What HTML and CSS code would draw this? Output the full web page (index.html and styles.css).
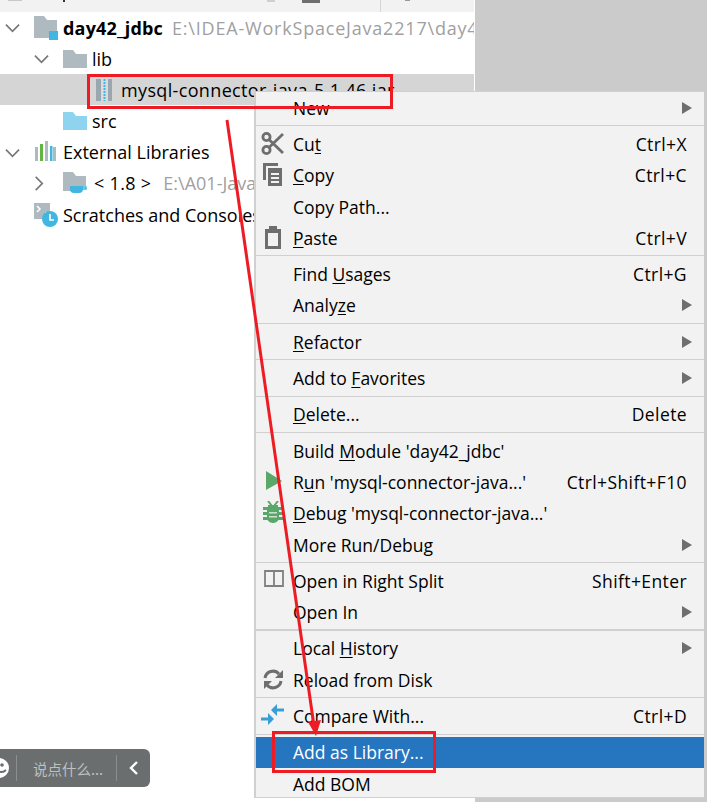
FILE: index.html
```html
<!DOCTYPE html>
<html lang="en">
<head>
<meta charset="utf-8">
<title>Add as Library</title>
<link rel="stylesheet" href="styles.css">
</head>
<body>
<div class="screen">
  <aside class="project">
    <div class="toolbar">
      <span class="tb tb-a"></span><span class="tb tb-b"></span><span class="tb tb-c"></span><span class="tb tb-d"></span><span class="tb tb-e"></span><span class="tb tb-f"></span>
    </div>
    <div class="tree">
      <div class="node d0">
        <svg class="twist" viewBox="0 0 16 16"><path d="M1 5l7 7 7-7" /></svg>
        <svg class="ico" viewBox="0 0 24 24"><path fill="#afb9c0" d="M0 0h10l3 4h10v12h-6v6H0z"/><path fill="#40b6e0" d="M15 15h9v9h-9z"/></svg>
        <b class="name bold">day42_jdbc</b><span class="path wide">E:\IDEA-WorkSpaceJava2217\day42_jdbc</span>
      </div>
      <div class="node d1">
        <svg class="twist" viewBox="0 0 16 16"><path d="M1 5l7 7 7-7" /></svg>
        <svg class="ico" viewBox="0 0 24 18" ><path fill="#afb9c0" d="M0 0h10l3 4h11v14H0z"/></svg>
        <span class="name">lib</span>
      </div>
      <div class="node d2 sel">
        <svg class="jar" viewBox="0 0 16 22"><path fill="#9aa7b0" d="M0 0h16v22H0z"/><path fill="#d8dcdd" d="M5 0h7v22H5z"/><path fill="none" stroke="#40b6e0" stroke-width="2" stroke-dasharray="2 1" d="M8.500 0v22"/></svg>
        <span class="name jarname">mysql-connector-java-5.1.46.jar</span>
      </div>
      <div class="node d1 leaf">
        <svg class="ico" viewBox="0 0 24 18"><path fill="#8fd4ef" d="M0 0h10l3 4h11v14H0z"/></svg>
        <span class="name">src</span>
      </div>
      <div class="node d0">
        <svg class="twist" viewBox="0 0 16 16"><path d="M1 5l7 7 7-7" /></svg>
        <svg class="ico" viewBox="0 0 24 24"><path fill="#afb9c0" d="M1 7h3v14H1zM11 1h3v20h-3zM19 7h3v14h-3z"/><path fill="#62b543" d="M6 4h3v17H6z"/><path fill="#40b6e0" d="M16 6h2.500v15H16z"/></svg>
        <span class="name">External Libraries</span>
      </div>
      <div class="node d1">
        <svg class="twist chev" viewBox="0 0 16 16"><path d="M5 1l7 7-7 7" /></svg>
        <svg class="ico" viewBox="0 0 24 22"><path fill="#afb9c0" d="M0 0h10l3 4h10v10H10v5H0z"/><path fill="#40b6e0" d="M7 14h13v3a4 4 0 0 1-4 4h-5a4 4 0 0 1-4-4z"/><path fill="none" stroke="#40b6e0" stroke-width="1.500" d="M20 15h3v2h-3"/></svg>
        <span class="name jdk">&lt; 1.8 &gt;</span><span class="path jdk-path">E:\A01-JavaSE\jdk1.8</span>
      </div>
      <div class="node d0 leaf">
        <svg class="ico" viewBox="0 0 24 24"><path fill="#afb9c0" d="M0 0h16v9h-5v7H0z"/><path fill="none" stroke="#fff" stroke-width="1.500" d="M3 3l3 3-3 3"/><circle cx="16" cy="16" r="8" fill="#40b6e0"/><path fill="none" stroke="#fff" stroke-width="1.600" d="M16 11v6h4"/></svg>
        <span class="name">Scratches and Consoles</span>
      </div>
    </div>
  </aside>

  <div class="backdrop"></div>

  <ul class="menu">
    <li class="item sub"><span>New</span></li>
    <li class="sep"></li>
    <li class="item"><svg class="mi" viewBox="0 0 24 24"><g fill="none" stroke="#6e6e6e" stroke-width="2.800"><circle cx="5.500" cy="5" r="3.600"/><circle cx="5.500" cy="18" r="3.600"/><path d="M8 7.500L22 21M8 15.500L22 2"/></g></svg><span>Cu<u>t</u></span><kbd>Ctrl+X</kbd></li>
    <li class="item"><svg class="mi" viewBox="0 0 24 24"><path fill="#6e6e6e" d="M2 0h15v3H5v14H2z"/><path fill="#6e6e6e" fill-rule="evenodd" d="M7 5h14v18H7zM10 10v2h8v-2zM10 14v2h8v-2zM10 18v2h8v-2z"/></svg><span><u>C</u>opy</span><kbd>Ctrl+C</kbd></li>
    <li class="item"><span>Copy Path...</span></li>
    <li class="item"><svg class="mi" viewBox="0 0 24 24"><path fill="#6e6e6e" fill-rule="evenodd" d="M4 3h4V0h8v3h4v20H4zM7 7v13h10V7z"/></svg><span><u>P</u>aste</span><kbd>Ctrl+V</kbd></li>
    <li class="sep"></li>
    <li class="item"><span>Find <u>U</u>sages</span><kbd>Ctrl+G</kbd></li>
    <li class="item sub"><span>Analy<u>z</u>e</span></li>
    <li class="sep"></li>
    <li class="item sub"><span><u>R</u>efactor</span></li>
    <li class="sep"></li>
    <li class="item sub"><span>Add to <u>F</u>avorites</span></li>
    <li class="sep"></li>
    <li class="item"><span><u>D</u>elete...</span><kbd>Delete</kbd></li>
    <li class="sep"></li>
    <li class="item"><span>Build <u>M</u>odule 'day42_jdbc'</span></li>
    <li class="item"><svg class="mi" viewBox="0 0 24 24"><path fill="#59a869" d="M5 1l16 10L5 20z"/></svg><span>R<u>u</u>n 'mysql-connector-java...'</span><kbd>Ctrl+Shift+F10</kbd></li>
    <li class="item"><svg class="mi" viewBox="0 0 24 24"><path fill="none" stroke="#59a869" stroke-width="2" d="M7 0l4 5M17 0l-4 5"/><path fill="#59a869" d="M2 6h20v3h-4v2h4v3h-4v2h4v3h-4.500q-2 3-5.500 3t-5.500-3H2v-3h4v-2H2v-3h4V9H2z"/><path fill="#59a869" d="M7 4h10v4H7z"/><path fill="#c9e2cf" d="M8 11h8v1.500H8zM8 15h8v1.500H8z"/></svg><span><u>D</u>ebug 'mysql-connector-java...'</span></li>
    <li class="item sub"><span>More Run/Debug</span></li>
    <li class="sep"></li>
    <li class="item"><svg class="mi" viewBox="0 0 24 24"><path fill="none" stroke="#808080" stroke-width="1.800" d="M4 2h18v15H4zM13 2v15"/></svg><span>Open in Right Split</span><kbd>Shift+Enter</kbd></li>
    <li class="item sub"><span>Open In</span></li>
    <li class="sep sep-thick"></li>
    <li class="item sub"><span>Local <u>H</u>istory</span></li>
    <li class="item"><svg class="mi" viewBox="0 0 24 24"><g fill="none" stroke="#6e6e6e" stroke-width="3"><path d="M4 10a8 8 0 0 1 14-4"/><path d="M20 13a8 8 0 0 1-14 4"/></g><path fill="#6e6e6e" d="M14 10h8V2zM11 13H3v8z"/></svg><span>Reload from Disk</span></li>
    <li class="sep"></li>
    <li class="item"><svg class="mi" viewBox="0 0 24 24"><path fill="#389fd6" d="M10 6l6-6v4.500h7v3h-7V12zM13 15L7 9v4.500H0v3h7V21z"/></svg><span>Compare With...</span><kbd>Ctrl+D</kbd></li>
    <li class="sep"></li>
    <li class="item active"><span>Add as Library...</span></li>
    <li class="item"><span>Add BOM</span></li>
  </ul>

  <div class="mark mark-jar"></div>
  <div class="mark mark-lib"></div>
  <svg class="arrow" viewBox="0 0 707 802"><path fill="none" stroke="#ed1c24" stroke-width="3" d="M227 120L314 726"/><path fill="#ed1c24" d="M316 736l-8-14 13-2z"/></svg>

  <div class="toast">
    <svg class="smile" viewBox="0 0 10 20"><circle cx="-1" cy="10" r="10" fill="#fff"/><circle cx="2" cy="7" r="1.800" fill="#6b6e6e"/><path fill="none" stroke="#6b6e6e" stroke-width="1.800" d="M-3 12q5 4 9 0"/></svg>
    <span class="toast-div"></span>
    <span class="toast-text">说点什么...</span>
    <span class="toast-div"></span>
    <svg class="toast-chev" viewBox="0 0 10 14"><path fill="none" stroke="#fff" stroke-width="2.400" d="M8 1L2 7l6 6"/></svg>
  </div>
</div>
</body>
</html>
```
FILE: styles.css
```css
* { box-sizing: border-box; }
html, body { margin: 0; padding: 0; }
body { background: #fff; font-family: "Open Sans", "Noto Sans", sans-serif; color: #000; overflow: hidden; }
.screen { position: relative; width: 707px; height: 802px; overflow: hidden; background: #fff; }

.project { width: 474px; height: 802px; background: #fff; overflow: hidden; }
.toolbar { display: flex; height: 12px; background: #f2f2f2; }
.tb { display: block; background: #6f6f6f; }
.tb-a { width: 14px; height: 1px; margin-left: 8px; background: #c8c8c8; }
.tb-b { width: 2px; height: 2px; margin-left: 41px; background: #333; }
.tb-c { width: 8px; height: 2px; margin-left: 202px; background: #d0d0d0; }
.tb-d { width: 18px; height: 3px; margin-left: 27px; }
.tb-e { width: 1px; height: 12px; margin-left: 60px; background: #d5d5d5; }
.tb-f { width: 5px; height: 1px; margin-left: 24px; background: #999; }

.node { display: flex; align-items: center; height: 31.170px; font-size: 18px; white-space: nowrap; overflow: hidden; }
.node.d0 { padding-left: 5px; }
.node.d1 { padding-left: 34px; }
.node.d0.leaf { padding-left: 34px; }
.node.d1.leaf { padding-left: 63px; }
.node.d2 { padding-left: 96px; }
.node.sel { background: #d5d5d5; }
.twist { width: 15px; height: 15px; flex: none; fill: none; stroke: #777; stroke-width: 1.800; margin-right: 14px; }
.chev { margin-left: -3px; margin-right: 17px; }
.ico { width: 24px; height: 24px; flex: none; margin-right: 5px; }
.jar { width: 16px; height: 22px; flex: none; margin-right: 9px; }
.bold { letter-spacing: 0.2px; }
.jarname { letter-spacing: 0.35px; }
.jdk { letter-spacing: 0.3px; margin-left: 2px; }
.path { color: #9f9f9f; margin-left: 9px; }
.jdk-path { margin-left: 12px; }
.wide { letter-spacing: 0.8px; }

.backdrop { position: absolute; left: 475px; top: 0; width: 232px; height: 802px; background: #cbcbcb; }

.menu { position: absolute; left: 254px; top: 91px; width: 450px; height: 707px; margin: 0; padding: 0; list-style: none; background: #f2f2f2; border-style: solid; border-color: #d0d0d0; border-width: 1px 0 1px 2px; font-size: 17.500px; }
.item { display: flex; align-items: center; justify-content: space-between; height: 31.300px; padding: 0 17px 0 37px; position: relative; white-space: nowrap; }
.item kbd { font: inherit; letter-spacing: 0.4px; }
.item.sub::after { content: ""; border-left: 10px solid #6e6e6e; border-top: 6px solid transparent; border-bottom: 6px solid transparent; margin-right: -5px; }
.item.active { background: #2675bf; color: #fff; }
.sep { height: 5px; display: flex; align-items: center; }
.sep::before { content: ""; display: block; width: 100%; height: 1px; background: #d0d0d0; }
.sep-thick::before { height: 2px; }
.mi { position: absolute; left: 5px; top: 3.600px; width: 24px; height: 24px; }
u { text-underline-offset: 2px; }

.mark { position: absolute; border: 3px solid #ed1c24; }
.mark-jar { left: 87px; top: 74px; width: 306px; height: 35px; }
.mark-lib { left: 272px; top: 731px; width: 164px; height: 42px; }
.arrow { position: absolute; left: 0; top: 0; width: 707px; height: 802px; pointer-events: none; }

.toast { position: absolute; left: 0; top: 749px; width: 150px; height: 38px; display: flex; align-items: center; background: #6b6e6e; border-radius: 0 6px 6px 0; }
.smile { width: 10px; height: 20px; flex: none; margin-right: 6px; }
.toast-div { width: 1px; height: 26px; background: #8c8f8f; flex: none; }
.toast-text { font-family: "Noto Sans CJK SC", sans-serif; font-size: 14.500px; color: #bfc1c1; margin-left: 16px; width: 83px; white-space: nowrap; }
.toast-chev { width: 10px; height: 14px; margin-left: 12px; flex: none; }
```
